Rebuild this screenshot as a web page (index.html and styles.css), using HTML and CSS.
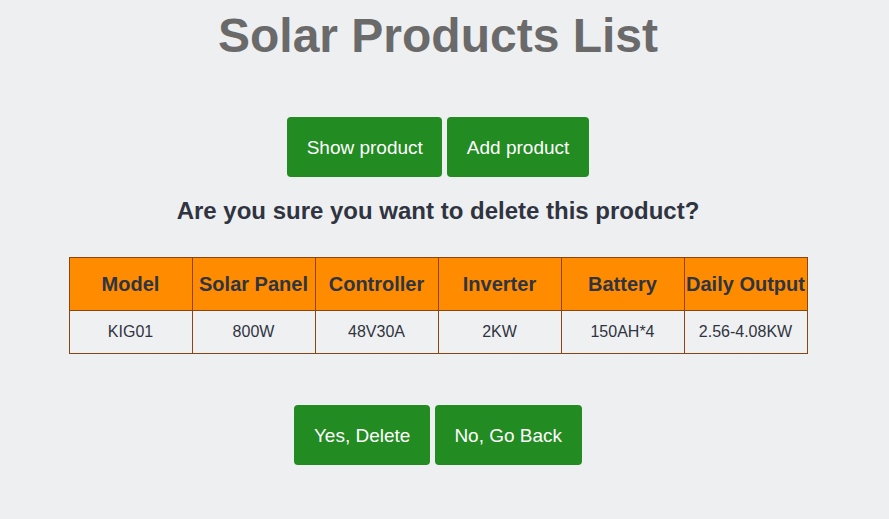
FILE: index.html
```html
<!DOCTYPE html>
<html lang="en">
<head>
<meta charset="utf-8">
<title>Solar Products List</title>
<link rel="stylesheet" href="styles.css">
</head>
<body>
<div class="page">
  <h1 class="title">Solar Products List</h1>
  <div class="actions top-actions">
    <a class="btn" href="#">Show product</a>
    <a class="btn" href="#">Add product</a>
  </div>
  <h2 class="question">Are you sure you want to delete this product?</h2>
  <table class="products">
    <thead>
      <tr>
        <th>Model</th>
        <th>Solar Panel</th>
        <th>Controller</th>
        <th>Inverter</th>
        <th>Battery</th>
        <th>Daily Output</th>
      </tr>
    </thead>
    <tbody>
      <tr>
        <td>KIG01</td>
        <td>800W</td>
        <td>48V30A</td>
        <td>2KW</td>
        <td>150AH*4</td>
        <td>2.56-4.08KW</td>
      </tr>
    </tbody>
  </table>
  <div class="actions bottom-actions">
    <button class="btn" type="button">Yes, Delete</button>
    <button class="btn" type="button">No, Go Back</button>
  </div>
</div>
</body>
</html>
```
FILE: styles.css
```css
html, body {
  margin: 0;
  padding: 0;
  background: #eeeff1;
}
body {
  font-family: "Liberation Sans", Arial, sans-serif;
  color: #2f3440;
}
.page {
  width: 876px;
  padding-top: 8px;
  display: flex;
  flex-direction: column;
  align-items: center;
}
.title {
  margin: 0;
  font-size: 48px;
  line-height: 55px;
  font-weight: bold;
  color: #6a6a6a;
}
.actions {
  display: flex;
  gap: 5px;
  justify-content: center;
}
.top-actions {
  margin-top: 54px;
}
.bottom-actions {
  margin-top: 51px;
}
.btn {
  display: block;
  box-sizing: border-box;
  height: 60px;
  padding: 2px 19.5px 0;
  border: none;
  border-radius: 4px;
  background: #228b22;
  color: #ffffff;
  font-family: "Liberation Sans", Arial, sans-serif;
  font-size: 19px;
  line-height: 58px;
  text-decoration: none;
  cursor: pointer;
}
.question {
  margin: 20px 0 0;
  font-size: 24px;
  line-height: 28px;
  font-weight: bold;
  color: #2f3440;
}
.products {
  margin-top: 32px;
  width: 739px;
  table-layout: fixed;
  border-collapse: collapse;
}
.products th,
.products td {
  border: 1px solid #8b4513;
  text-align: center;
  padding: 0 1px;
  white-space: nowrap;
}
.products th {
  background: #ff8c00;
  height: 52px;
  font-size: 20px;
  font-weight: bold;
  color: #2f3440;
}
.products td {
  background: #eff0f2;
  height: 42px;
  font-size: 16px;
  color: #2f3440;
}
```
